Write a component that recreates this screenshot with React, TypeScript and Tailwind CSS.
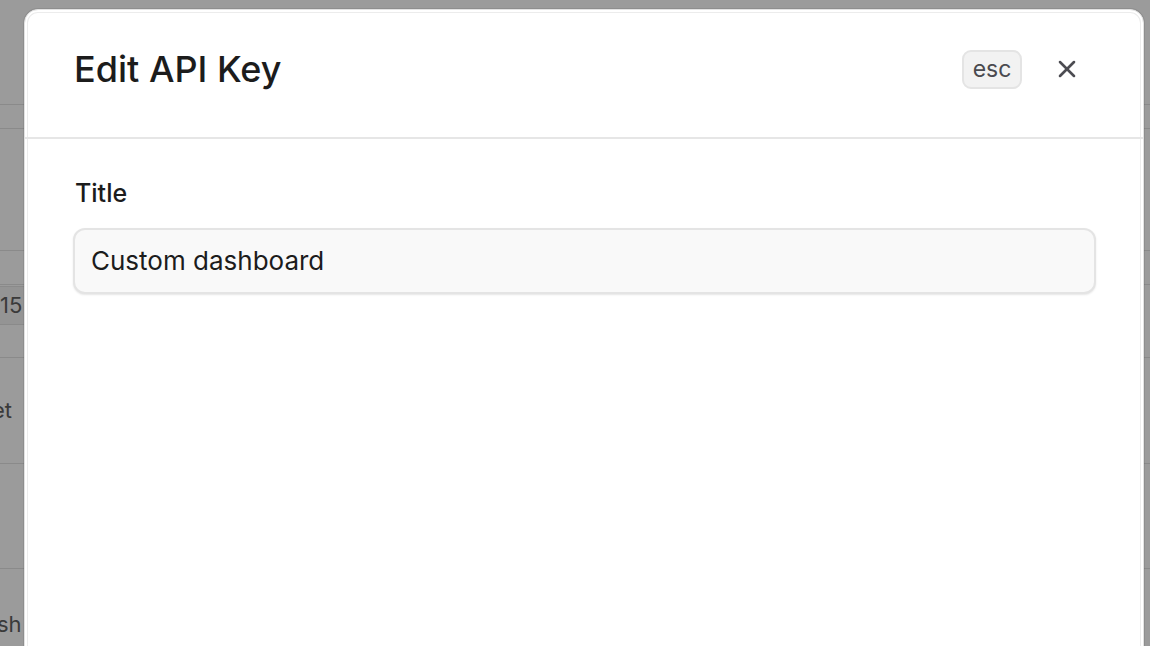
import { X } from "lucide-react";

const rows = [
  { h: 24, text: "" },
  { h: 122, text: "" },
  { h: 34, text: "" },
  { h: 73, text: "15" },
  { h: 106, text: "et" },
  { h: 105, text: "" },
  { h: 100, text: "sh" },
];

export default function App() {
  return (
    <div
      className="relative w-[1150px] h-[646px] overflow-hidden bg-[#9b9b9b]"
      style={{ fontFamily: "Inter, 'Noto Sans', sans-serif" }}
    >
      {/* dimmed page behind the dialog */}
      <div className="flex flex-col pt-[104px]">
        {rows.map((r, i) => (
          <div
            key={i}
            className={
              "flex border-t border-[#8a8a8a] text-[22px] text-[#3a3a3a] " +
              (r.text === "15" ? "items-start" : "items-center")
            }
            style={{ height: r.h }}
          >
            {r.text === "15" ? (
              <span className="mt-[1px] ml-[-10px] pl-[10px] pr-[20px] py-[2px] bg-[#949494] border-y border-[#8a8a8a]">
                15
              </span>
            ) : r.text === "et" ? (
              <span className="ml-[-8px]">et</span>
            ) : r.text === "sh" ? (
              <span className="ml-[-3px] mt-[12px]">sh</span>
            ) : null}
          </div>
        ))}
      </div>

      {/* dialog */}
      <div className="absolute left-[24px] top-[9px] w-[1120px] h-[660px] rounded-[14px] bg-white border border-[#e2e2e2] shadow-[0_0_0_1px_rgba(0,0,0,0.08),inset_0_0_0_2px_#ffffff,inset_0_0_0_3px_#ececec]">
        {/* header */}
        <div className="flex items-center justify-between h-[129px] pb-[9px] pl-[49px] pr-[62px] border-b-2 border-[#e6e6e6]">
          <h1 className="text-[36px] font-medium text-[#1c1c1c]">
            Edit API Key
          </h1>
          <div className="flex items-center gap-[31px]">
            <span className="flex items-center justify-center w-[60px] h-[39px] rounded-[9px] bg-[#f2f2f2] border-2 border-[#e4e4e4] text-[23px] text-[#4a4a4f]">
              esc
            </span>
            <X size={28} strokeWidth={2.2} className="text-[#4c4c52]" />
          </div>
        </div>

        {/* body */}
        <div className="pt-[36px] pl-[48px] pr-[47px]">
          <label className="block pl-[2px] text-[25px] font-medium text-[#1c1c1c]">
            Title
          </label>
          <div className="mt-[15px] flex items-center h-[66px] px-[16px] rounded-[12px] bg-[#f9f9f9] border-2 border-[#e4e4e4] shadow-[0_1px_2px_rgba(0,0,0,0.1)] text-[26px] text-[#1c1c1c]">
            Custom dashboard
          </div>
        </div>
      </div>
    </div>
  );
}
